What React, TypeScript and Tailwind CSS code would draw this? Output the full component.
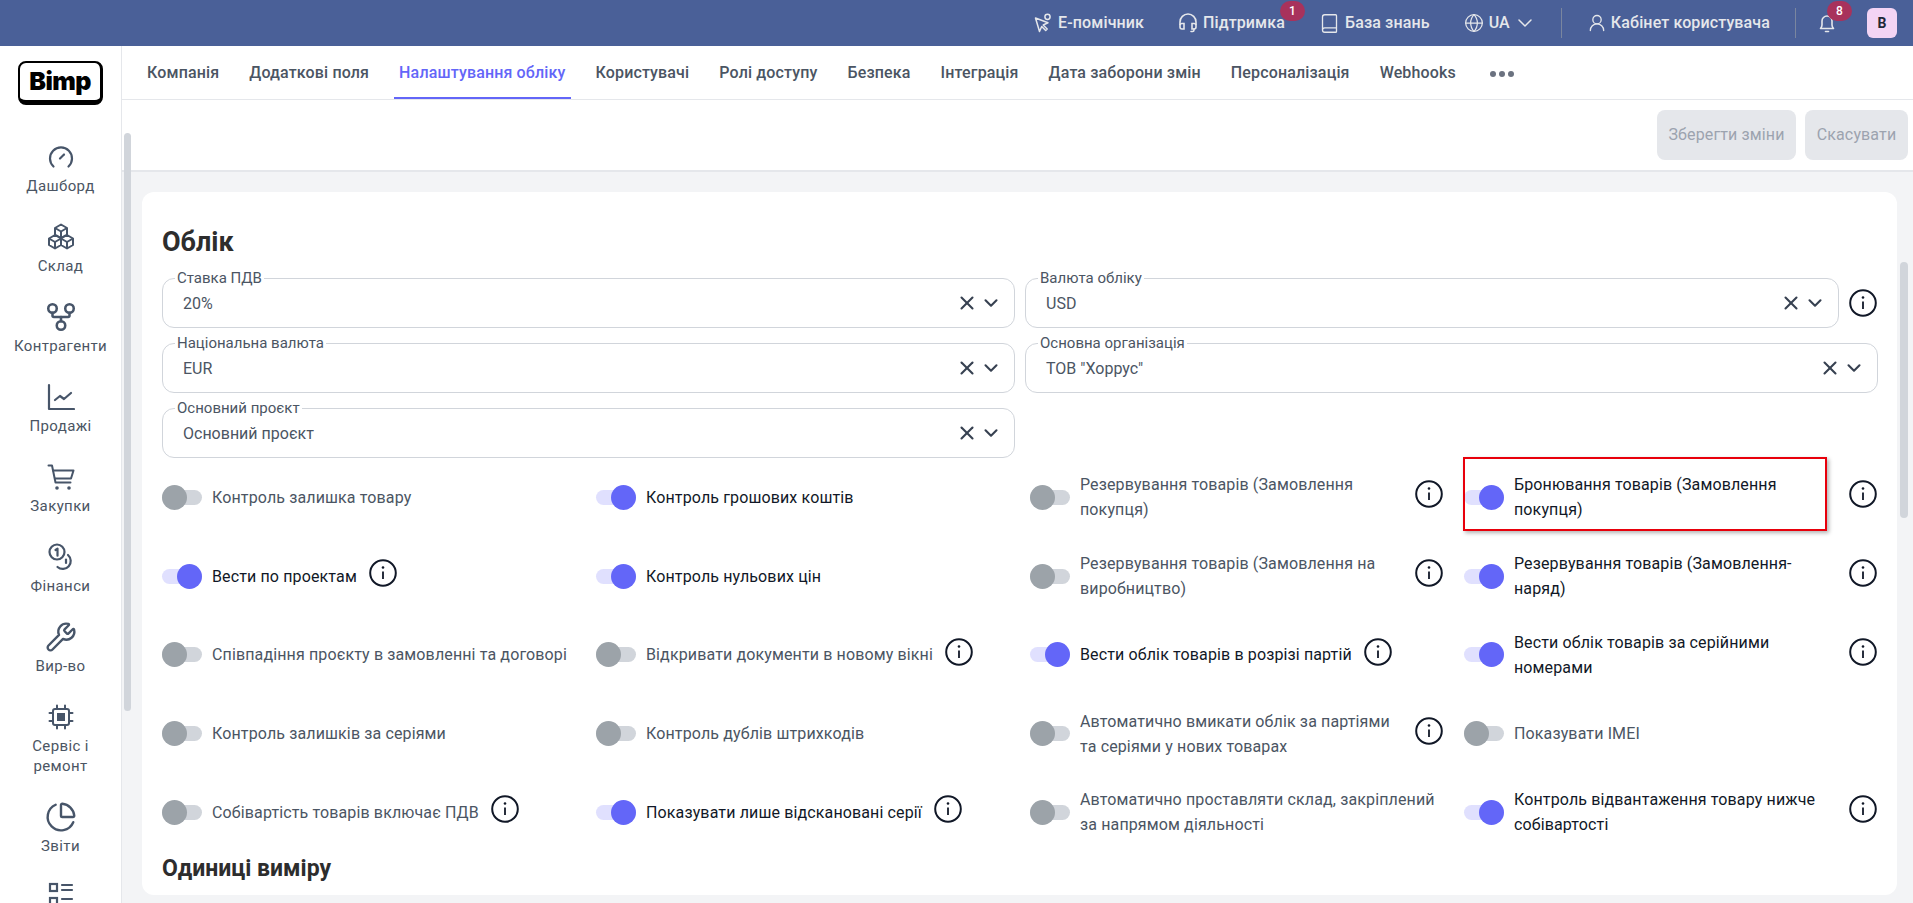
import { Book, ChartPie, ChevronDown, Globe, GitFork, UserRound, Wrench, X } from "lucide-react";

const tabs = [
  "Компанія",
  "Додаткові поля",
  "Налаштування обліку",
  "Користувачі",
  "Ролі доступу",
  "Безпека",
  "Інтеграція",
  "Дата заборони змін",
  "Персоналізація",
  "Webhooks",
];

type Opt = { label: string; on?: boolean; info?: boolean };

const options: Opt[] = [
  { label: "Контроль залишка товару" },
  { label: "Контроль грошових коштів", on: true },
  { label: "Резервування товарів (Замовлення покупця)", info: true },
  { label: "Бронювання товарів (Замовлення покупця)", on: true, info: true },
  { label: "Вести по проектам", on: true, info: true },
  { label: "Контроль нульових цін", on: true },
  { label: "Резервування товарів (Замовлення на виробництво)", info: true },
  { label: "Резервування товарів (Замовлення-наряд)", on: true, info: true },
  { label: "Співпадіння проєкту в замовленні та договорі" },
  { label: "Відкривати документи в новому вікні", info: true },
  { label: "Вести облік товарів в розрізі партій", on: true, info: true },
  { label: "Вести облік товарів за серійними номерами", on: true, info: true },
  { label: "Контроль залишків за серіями" },
  { label: "Контроль дублів штрихкодів" },
  { label: "Автоматично вмикати облік за партіями та серіями у нових товарах", info: true },
  { label: "Показувати IMEI" },
  { label: "Собівартість товарів включає ПДВ", info: true },
  { label: "Показувати лише відскановані серії", on: true, info: true },
  { label: "Автоматично проставляти склад, закріплений за напрямом діяльності" },
  { label: "Контроль відвантаження товару нижче собівартості", on: true, info: true },
];

const HelperIcon = () => (
  <svg width="18" height="20" viewBox="0 0 18 20" fill="none" stroke="currentColor" strokeWidth="1.5" strokeLinejoin="round" strokeLinecap="round">
    <path d="M1.500 5l4 13.500 2.200-5 4 4 1.500-1.500-4-4 4.800-2.200z" />
    <circle cx="13.500" cy="3.800" r="2.600" />
  </svg>
);

const HeadsetIcon = () => (
  <svg width="20" height="20" viewBox="0 0 20 20" fill="none" stroke="currentColor" strokeWidth="1.6" strokeLinecap="round">
    <path d="M2 11.500V9a8 8 0 0 1 16 0v2.500" />
    <path d="M6 10.500H4a2 2 0 0 0-2 2V14a2 2 0 0 0 2 2h2z" />
    <path d="M14 10.500h2a2 2 0 0 1 2 2V14a2 2 0 0 1-2 2h-2z" />
    <path d="M16 16v1a1.500 1.500 0 0 1-1.500 1.500H13" />
  </svg>
);

const BellIcon = () => (
  <svg width="20" height="22" viewBox="0 0 20 22" fill="none" stroke="currentColor" strokeWidth="1.6" strokeLinecap="round" strokeLinejoin="round">
    <path d="M5 9a5 5 0 0 1 10 0v4c0 1.500.6 2.500 1.500 3.500h-13C4.400 15.500 5 14.500 5 13z" />
    <path d="M8.500 19.500h3" />
  </svg>
);

const GaugeIcon = () => (
  <svg width="28" height="28" viewBox="0 0 28 28" fill="none" stroke="currentColor" strokeWidth="2.200" strokeLinecap="round">
    <path d="M6.500 23.500a11 11 0 1 1 15 0" />
    <path d="M13 15.500l4-4" />
  </svg>
);

const BoxesIcon = () => (
  <svg width="28" height="28" viewBox="0 0 28 28" fill="none" stroke="currentColor" strokeWidth="2" strokeLinejoin="round">
    <path d="M14 1.500l6 3.500v6.500l-6 3.500-6-3.500V5z" />
    <path d="M8 5l6 3.500L20 5M14 8.500V15" />
    <path d="M8 12l6 3.500V22l-6 3.500L2 22v-6.500z" />
    <path d="M2 15.500L8 19l6-3.500M8 19v6.500" />
    <path d="M20 12l6 3.500V22l-6 3.500-6-3.500v-6.500z" />
    <path d="M14 15.500l6 3.500 6-3.500M20 19v6.500" />
  </svg>
);

const ChartIcon = () => (
  <svg width="28" height="28" viewBox="0 0 28 28" fill="none" stroke="currentColor" strokeWidth="2.200" strokeLinecap="round" strokeLinejoin="round">
    <path d="M2 2v24h25" />
    <path d="M8 17l5-4 4 3 7-6" />
  </svg>
);

const CartIcon = () => (
  <svg width="28" height="28" viewBox="0 0 28 28" fill="none" stroke="currentColor" strokeWidth="2" strokeLinecap="round" strokeLinejoin="round">
    <path d="M1.500 2.500h3.500l3.500 17h15" />
    <path d="M6 7.500h20.500l-2.500 8H8" />
    <circle cx="10" cy="25" r="1.800" fill="currentColor" stroke="none" />
    <circle cx="22" cy="25" r="1.800" fill="currentColor" stroke="none" />
  </svg>
);

const CoinsIcon = () => (
  <svg width="28" height="28" viewBox="0 0 28 28" fill="none" stroke="currentColor" strokeWidth="2.200" strokeLinecap="round" strokeLinejoin="round">
    <circle cx="10" cy="9" r="7.500" />
    <path d="M8.500 7l2-1.300v7" />
    <path d="M21 12a7.500 7.500 0 0 1-10.500 12" />
    <path d="M19 16.500v3.500" />
  </svg>
);

const ChipIcon = () => (
  <svg width="26" height="26" viewBox="0 0 26 26" fill="none" stroke="currentColor" strokeWidth="2" strokeLinecap="round">
    <rect x="5" y="5" width="16" height="16" rx="2" />
    <rect x="9" y="9" width="8" height="8" fill="currentColor" stroke="none" />
    <path d="M9 1.500V4M17 1.500V4M9 22v2.500M17 22v2.500M1.500 9H4M1.500 17H4M22 9h2.500M22 17h2.500" />
  </svg>
);

const ListIcon = () => (
  <svg width="26" height="26" viewBox="0 0 26 26" fill="none" stroke="currentColor" strokeWidth="2.200" strokeLinecap="round">
    <rect x="2" y="2" width="7" height="7" />
    <path d="M14 3h10M14 8h10M14 17h10M14 22h10" />
    <rect x="2" y="16" width="7" height="7" />
  </svg>
);

const nav = [
  { label: "Дашборд", icon: <GaugeIcon /> },
  { label: "Склад", icon: <BoxesIcon /> },
  { label: "Контрагенти", icon: <GitFork size={34} strokeWidth={1.8} /> },
  { label: "Продажі", icon: <ChartIcon /> },
  { label: "Закупки", icon: <CartIcon /> },
  { label: "Фінанси", icon: <CoinsIcon /> },
  { label: "Вир-во", icon: <Wrench size={32} strokeWidth={1.8} /> },
  { label: "Сервіс і ремонт", icon: <ChipIcon /> },
  { label: "Звіти", icon: <ChartPie size={32} strokeWidth={1.8} /> },
];

const Info = () => (
  <svg width="28" height="28" viewBox="0 0 28 28" fill="none" stroke="#111827" className="shrink-0">
    <circle cx="14" cy="14" r="12.800" strokeWidth="2" />
    <path d="M14 12.500v7.500" strokeWidth="1.800" />
    <circle cx="14" cy="8.500" r="1.300" fill="#111827" stroke="none" />
  </svg>
);

const Toggle = ({ on }: { on?: boolean }) => (
  <div className={`relative h-[25px] w-10 shrink-0 flex items-center ${on ? "justify-end" : "justify-start"}`}>
    <div className={`h-[15px] w-full rounded-full ${on ? "bg-[#e0e0fe]" : "bg-[#d1d5db]"}`} />
    <div className={`absolute size-[25px] rounded-full ${on ? "bg-[#6366f8]" : "bg-[#9ca3a9]"}`} />
  </div>
);

const Field = ({ label, value, className }: { label: string; value: string; className?: string }) => (
  <div className={`relative flex h-[50px] items-center rounded-xl border border-[#d1d5db] pl-5 pr-3 ${className ?? ""}`}>
    <span className="absolute -top-2.5 left-3 bg-white px-0.5 text-[15px] leading-[18px] text-[#4b5563]">{label}</span>
    <span className="flex-1 pt-0.5 text-base text-[#4b5563]">{value}</span>
    <X size={22} strokeWidth={2.3} className="text-[#374151]" />
    <ChevronDown size={22} strokeWidth={2.3} className="ml-0.5 text-[#374151]" />
  </div>
);

export default function App() {
  return (
    <div className="relative flex h-[903px] w-[1913px] flex-col overflow-hidden bg-white font-['Roboto',sans-serif]">
      <header className="flex h-[46px] shrink-0 items-center justify-end bg-[#4a6098] pr-4 text-base font-medium tracking-[0.13px] text-[#e5e7eb]">
        <div className="flex items-center gap-1.5">
          <HelperIcon />
          <span>Е-помічник</span>
        </div>
        <div className="relative ml-[34px] flex items-center gap-[5px]">
          <HeadsetIcon />
          <span>Підтримка</span>
          <span className="absolute -right-5 -top-2.5 flex h-5 w-[25px] items-center justify-center rounded-full bg-[#a8325c] text-xs text-white">1</span>
        </div>
        <div className="ml-[34px] flex items-center gap-[5px]">
          <Book size={21} strokeWidth={1.500} />
          <span>База знань</span>
        </div>
        <div className="ml-[34px] flex items-center gap-[5px]">
          <Globe size={20} strokeWidth={1.500} />
          <span>UA</span>
          <ChevronDown size={24} strokeWidth={1.500} className="ml-[-2px]" />
        </div>
        <div className="ml-6 h-[30px] w-px bg-[#7a869f]" />
        <div className="ml-[25px] flex items-center gap-1">
          <UserRound size={20} strokeWidth={1.600} />
          <span>Кабінет користувача</span>
        </div>
        <div className="ml-[25px] h-[30px] w-px bg-[#7a869f]" />
        <div className="relative ml-[21px]">
          <BellIcon />
          <span className="absolute -top-[11px] left-2.5 flex h-5 w-[25px] items-center justify-center rounded-full bg-[#a8325c] text-xs text-white">8</span>
        </div>
        <div className="ml-[30px] flex size-[30px] items-center justify-center rounded-md bg-[#f3d4f4] text-sm font-bold text-[#1f2937]">B</div>
      </header>

      <div className="flex min-h-0 flex-1">
        <aside className="flex w-[122px] shrink-0 flex-col items-center overflow-hidden border-r border-[#e5e7eb]">
          <div className="mt-[15px] flex h-11 w-[85px] shrink-0 items-center justify-center rounded-lg border-2 border-b-[5px] border-r-[3px] border-black font-['Inter',sans-serif] text-[25px] font-black tracking-tight text-black">
            Bimp
          </div>
          <div className="mt-[37px] flex w-full flex-col items-center gap-[26px]">
            {nav.map((n) => (
              <div key={n.label} className="flex w-full flex-col items-center text-center text-[#4b5563]">
                <div className="flex h-[30px] items-center justify-center text-[#475569]">{n.icon}</div>
                <span className="mt-1 px-4 text-[15px] leading-5 tracking-wide">{n.label}</span>
              </div>
            ))}
            <div className="text-[#475569]">
              <ListIcon />
            </div>
          </div>
        </aside>

        <main className="flex min-w-0 flex-1 flex-col">
          <nav className="flex h-[54px] shrink-0 items-stretch gap-5 border-b border-[#e5e7eb] pl-5">
            {tabs.map((t) => (
              <div
                key={t}
                className={`flex items-center border-b-2 px-[5px] pt-0.5 text-base font-medium tracking-[0.15px] ${
                  t === "Налаштування обліку" ? "border-[#6366f8] text-[#6366f8]" : "border-transparent text-[#4b5563]"
                }`}
              >
                {t}
              </div>
            ))}
            <div className="ml-[9px] flex items-center gap-[3px] pt-0.5">
              <span className="size-1.5 rounded-full bg-[#6b7280]" />
              <span className="size-1.5 rounded-full bg-[#6b7280]" />
              <span className="size-1.5 rounded-full bg-[#6b7280]" />
            </div>
          </nav>

          <div className="flex h-[72px] shrink-0 items-center justify-end gap-[9px] border-b-2 border-[#e5e7eb] pr-[5px]">
            <button className="h-[50px] w-[139px] rounded-lg bg-[#e5e7eb] text-base tracking-[0.13px] text-[#9ca3af]">Зберегти зміни</button>
            <button className="h-[50px] w-[103px] rounded-lg bg-[#e5e7eb] text-base tracking-[0.13px] text-[#9ca3af]">Скасувати</button>
          </div>

          <div className="min-h-0 flex-1 bg-[#f3f4f6] pb-2 pl-5 pr-4 pt-5">
            <section className="h-full overflow-hidden rounded-xl bg-white pl-5 pr-[19px] pt-[32px]">
              <h1 className="text-[27px] font-bold leading-9 text-[#2d2d2d]">Облік</h1>
              <div className="mt-[18px] grid grid-cols-[853px_1fr] gap-x-[10px] gap-y-[15px]">
                <Field label="Ставка ПДВ" value="20%" />
                <div className="flex items-center gap-2.5 pr-px">
                  <Field label="Валюта обліку" value="USD" className="flex-1" />
                  <Info />
                </div>
                <Field label="Національна валюта" value="EUR" />
                <Field label="Основна організація" value={'ТОВ "Хоррус"'} />
                <Field label="Основний проєкт" value="Основний проєкт" />
              </div>
              <div className="grid grid-cols-[repeat(4,413px)] gap-x-[21px]">
                {options.map((o) => (
                  <div key={o.label} className="flex h-[78.750px] items-center">
                    <Toggle on={o.on} />
                    <span className={`ml-2.5 text-base leading-[25px] tracking-[0.13px] ${o.on ? "text-[#111827]" : "text-[#4b5563]"}`}>{o.label}</span>
                    {o.info && (
                      <div className="ml-3 -mt-1.5">
                        <Info />
                      </div>
                    )}
                  </div>
                ))}
              </div>
              <h2 className="mt-px text-[23px] font-bold leading-8 text-[#2d2d2d]">Одиниці виміру</h2>
            </section>
          </div>
        </main>
      </div>

      {/* scrollbars and the red highlight lie over the page */}
      <div className="absolute left-[124px] top-[133px] h-[578px] w-[7px] rounded-full bg-[#d1d5db]" />
      <div className="absolute left-[1900px] top-[262px] h-[256px] w-2 rounded-full bg-[#d1d5db]" />
      <div className="absolute left-[1463px] top-[457px] h-[74px] w-[364px] border-2 border-[#e8000b] shadow-[2px_2px_4px_rgba(0,0,0,0.3)]" />
    </div>
  );
}
